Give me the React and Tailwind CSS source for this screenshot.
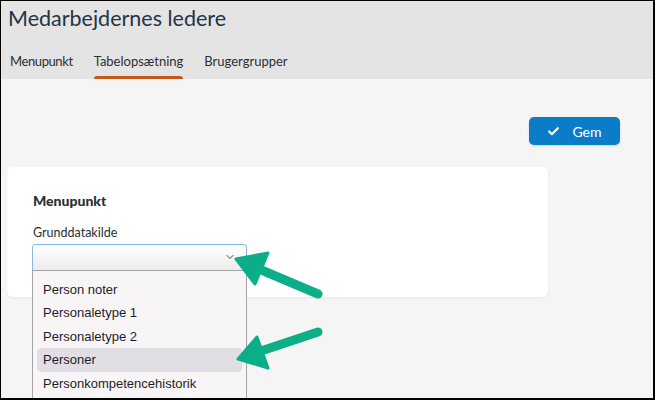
import React from 'react';
import { Check, ChevronDown } from 'lucide-react';

const tabs = ['Menupunkt', 'Tabelopsætning', 'Brugergrupper'];
const options = ['Person noter', 'Personaletype 1', 'Personaletype 2', 'Personer', 'Personkompetencehistorik'];

const Arrows = () => (
    <svg className="absolute left-0 top-0 pointer-events-none" width="655" height="400">
        <g stroke="#0bae88" strokeWidth="9" strokeLinecap="round" fill="none">
            <line x1="317" y1="293" x2="258" y2="268" />
            <line x1="317" y1="331" x2="260" y2="350" />
        </g>
        <polygon points="235,258 267,252 254,283" fill="#0bae88" stroke="#0bae88" strokeWidth="3" strokeLinejoin="round" />
        <polygon points="237,358 256,336 267,367" fill="#0bae88" stroke="#0bae88" strokeWidth="3" strokeLinejoin="round" />
    </svg>
);

export default function App() {
    return (
        <div className="relative w-[655px] h-[400px] overflow-hidden border-l border-t border-r-2 border-b-2 border-black bg-[#f5f5f5]" style={{ fontFamily: 'Lato, "Open Sans", sans-serif' }}>
            <div className="bg-[#e4e4e4] h-[78px] flex flex-col">
                <h1 className="text-[21.5px] leading-none text-[#243447] pl-[7px] pt-[7px]">Medarbejdernes ledere</h1>
                <div className="flex gap-[21px] pl-[9px] mt-auto">
                    {tabs.map((t) => (
                        <div key={t} className={`relative text-[13px] text-[#2b2f36] pb-[8px] ${t === 'Menupunkt' ? 'tracking-[-0.4px]' : ''}`}>
                            {t}
                            {t === 'Tabelopsætning' && (
                                <div className="absolute left-0 right-0 bottom-0 h-[3px] rounded-t bg-[#c4571a]" />
                            )}
                        </div>
                    ))}
                </div>
            </div>

            <div className="flex justify-end pr-[33px] pt-[38px]">
                <button className="flex items-center justify-center gap-[12px] w-[91px] h-[28px] rounded-[5px] bg-[#0a7cc8] text-white text-[14px] shadow-sm">
                    <Check size={13} strokeWidth={4} />
                    Gem
                </button>
            </div>

            <div className="mt-[22px] ml-[6px] w-[541px] h-[130px] bg-white rounded-md shadow-[0_1px_3px_rgba(0,0,0,0.06)] pl-[26px] pt-[23px]">
                <div className="text-[14px] font-black text-[#2a2f36]">Menupunkt</div>
                <div className="text-[12.5px] text-[#2a2f36] mt-[13px]">Grunddatakilde</div>
                <div className="relative mt-[1px] -ml-px w-[215px]">
                    <div className="h-[27px] rounded-t-[3px] border border-[#86b8e4] bg-gradient-to-b from-white to-[#ececec] flex items-center justify-end pr-[10px]">
                        <ChevronDown size={12} className="text-[#444]" />
                    </div>
                    <div className="absolute left-0 top-[26px] w-[215px] h-[140px] bg-[#f8f5f7] border border-[#a5a5a5] px-[4px] pt-[7px] text-[13px] text-[#1d1d2a]" style={{ fontFamily: '"Liberation Sans", Arial, sans-serif' }}>
                        {options.map((o) => (
                            <div key={o} className={`h-[23.5px] flex items-center pl-[6px] rounded-sm ${o === 'Personer' ? 'bg-[#e1dfe5]' : ''}`}>{o}</div>
                        ))}
                    </div>
                </div>
            </div>

            <Arrows />
        </div>
    );
}
